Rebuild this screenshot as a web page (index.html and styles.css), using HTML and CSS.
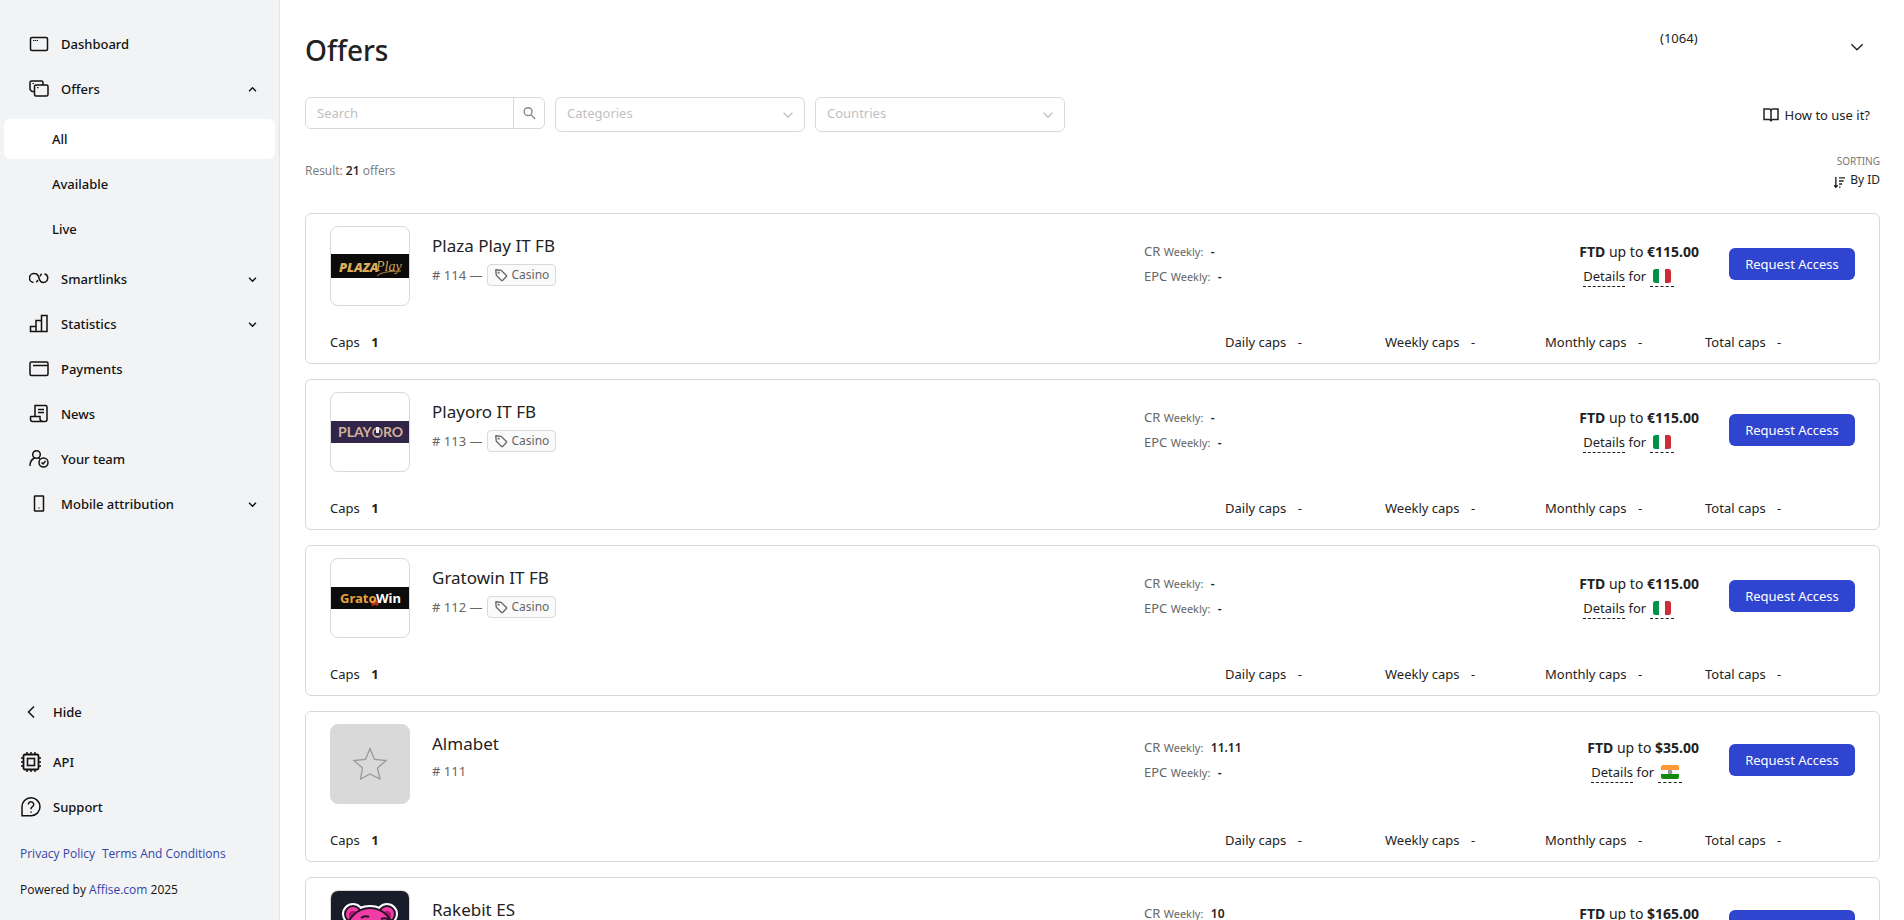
FILE: index.html
```html
<!DOCTYPE html>
<html lang="en">
<head>
<meta charset="UTF-8">
<meta name="viewport" content="width=device-width, initial-scale=1.0">
<title>Offers</title>
<link rel="stylesheet" href="styles.css">
</head>
<body>
<!-- shared icons -->
<svg class="sprite" aria-hidden="true">
    <symbol id="chevron" viewBox="0 0 16 16"><path d="M3 5.5l5 5 5-5"/></symbol>
    <symbol id="tag" viewBox="0 0 16 16"><path d="M2 2.5L2.6 8.2L8.6 14.2Q9.2 14.8 9.8 14.2L14.2 9.8Q14.8 9.2 14.2 8.6L8.2 2.6L2.5 2Q2 2 2 2.5Z"/><path d="M5 5h.6v.6H5z"/></symbol>
    <symbol id="italy" viewBox="0 0 18 14">
        <path d="M2.5 0H6v14H2.5Q0 14 0 11.5v-9Q0 0 2.5 0Z" fill="#009246"/>
        <path d="M12 0h3.500Q18 0 18 2.500v9Q18 14 15.500 14H12Z" fill="#ce2b37"/>
        <path d="M6 0h6v14H6z" fill="#fff"/>
    </symbol>
    <symbol id="india" viewBox="0 0 18 14">
        <path d="M2 0h14q2 0 2 2v3H0V2q0-2 2-2Z" fill="#f93"/>
        <path d="M0 5h18v4H0z" fill="#f4f4f4"/>
        <path d="M0 9h18v3q0 2-2 2H2q-2 0-2-2Z" fill="#138808"/>
        <circle cx="9" cy="7" r="1.500" fill="#bbc" stroke="#889"/>
    </symbol>
</svg>

<div class="layout">
    <aside class="sidebar">
        <nav class="menu">
            <a href="#" class="menu-item">
                <svg class="icon" viewBox="0 0 20 20"><rect x="1.500" y="3.500" width="17" height="13" rx="1.500"/><path d="M4 6.500h5" stroke-width="1" stroke-dasharray="1.300 .6"/></svg>
                <span>Dashboard</span>
            </a>
            <a href="#" class="menu-item">
                <svg class="icon" viewBox="0 0 20 20"><path d="M5 12.500H3L1 10.500V3.500Q1 2 2.500 2H12.500Q14 2 14 3.500V6"/><rect x="5.500" y="6" width="13.500" height="11" rx="1.500"/><path d="M3.500 4.500h1.500M8 8.700h1.500" stroke-width="1.200"/></svg>
                <span>Offers</span>
                <svg class="arrow arrow-up"><use href="#chevron"/></svg>
            </a>
            <div class="submenu">
                <a href="#" class="submenu-item active">All</a>
                <a href="#" class="submenu-item">Available</a>
                <a href="#" class="submenu-item">Live</a>
            </div>
            <a href="#" class="menu-item">
                <svg class="icon" viewBox="0 0 20 20"><path d="M4.500 13.500A4.500 4.500 0 0 1 5.500 4.500Q9 4.500 10 9T14.500 13.500A4.500 4.500 0 0 0 15.500 4.700M7.200 13.200Q8.600 12.400 8.800 10.800M12.800 4.900Q11.400 5.700 11.200 7.300"/></svg>
                <span>Smartlinks</span>
                <svg class="arrow"><use href="#chevron"/></svg>
            </a>
            <a href="#" class="menu-item">
                <svg class="icon" viewBox="0 0 20 20"><path d="M1.500 17.500V12.500H7V17.500ZM7 17.500V6.500H12.500V17.500ZM12.500 17.500V1.500H18V17.500Z"/></svg>
                <span>Statistics</span>
                <svg class="arrow"><use href="#chevron"/></svg>
            </a>
            <a href="#" class="menu-item">
                <svg class="icon" viewBox="0 0 20 20"><rect x="1" y="3" width="18" height="13.500" rx="1.500"/><path d="M4 6.500h15"/></svg>
                <span>Payments</span>
            </a>
            <a href="#" class="menu-item">
                <svg class="icon" viewBox="0 0 20 20"><path d="M6 12V1.500H16.500Q18 1.500 18 3V15.500Q18 17.500 16 17.500H3.500Q1.500 17.500 1.500 15V13Q1.500 12.500 2 12.500H11V15Q11.500 17.500 14 17.500M9 5.500h6M9 8.500h6"/></svg>
                <span>News</span>
            </a>
            <a href="#" class="menu-item">
                <svg class="icon" viewBox="0 0 20 20"><circle cx="7.500" cy="5.500" r="3.800"/><path d="M1 17Q1 11 5.500 9M9.500 9L11 10M12.500 13.500l1.500 1.500 2.500-3"/><circle cx="14.500" cy="13.500" r="4.500"/></svg>
                <span>Your team</span>
            </a>
            <a href="#" class="menu-item">
                <svg class="icon" viewBox="0 0 20 20"><rect x="5.500" y="2" width="9" height="15" rx=".5"/><path d="M9.300 14h1.400" stroke-width="1"/></svg>
                <span>Mobile attribution</span>
                <svg class="arrow"><use href="#chevron"/></svg>
            </a>
        </nav>

        <div class="sidebar-bottom">
            <button type="button" class="bottom-item hide-btn">
                <svg class="icon" viewBox="0 0 20 20"><path d="M13 4.500L7.500 10l5.500 5.500"/></svg>
                <span>Hide</span>
            </button>
            <a href="#" class="bottom-item">
                <svg class="icon" viewBox="0 0 20 20"><rect x="2.500" y="2.500" width="15" height="15" rx="1.500" stroke-width="1.800"/><rect x="6.500" y="6.500" width="7" height="7" stroke-width="1.600"/><path d="M6 0v2M10 0v2M14 0v2M6 18v2M10 18v2M14 18v2M0 6h2M0 10h2M0 14h2M18 6h2M18 10h2M18 14h2"/></svg>
                <span>API</span>
            </a>
            <a href="#" class="bottom-item">
                <svg class="icon" viewBox="0 0 20 20"><path d="M1 18.800V10A9 9 0 1 1 10 18.800ZM7.300 7.500A2.700 2.700 0 1 1 11.500 9.700Q10 10.600 10 12.300M10 14.500v1.200"/></svg>
                <span>Support</span>
            </a>
            <div class="policies">
                <a href="#">Privacy Policy</a>
                <a href="#">Terms And Conditions</a>
            </div>
            <div class="powered">Powered by <a href="#">Affise.com</a> 2025</div>
        </div>
    </aside>

    <main class="content">
        <header class="page-header">
            <h1>Offers</h1>
            <button type="button" class="account">
                <span>(1064)</span>
                <svg class="account-arrow"><use href="#chevron"/></svg>
            </button>
        </header>

        <div class="toolbar">
            <form class="search">
                <input type="text" placeholder="Search" aria-label="Search">
                <button type="button" aria-label="Find">
                    <svg viewBox="0 0 16 16"><circle cx="6.500" cy="6" r="4.200"/><path d="M9.500 9.200L14 13.800"/></svg>
                </button>
            </form>
            <div class="select">
                <select aria-label="Categories"><option>Categories</option></select>
                <svg><use href="#chevron"/></svg>
            </div>
            <div class="select">
                <select aria-label="Countries"><option>Countries</option></select>
                <svg><use href="#chevron"/></svg>
            </div>
            <a href="#" class="how-to">
                <svg viewBox="0 0 16 16"><path d="M1 2H6Q8 2 8 4Q8 2 10 2H15V12.500H10Q8 12.500 8 14.500Q8 12.500 6 12.500H1ZM8 4V14"/></svg>
                How to use it?
            </a>
        </div>

        <div class="summary">
            <div class="result">Result: <b>21</b> offers</div>
            <div class="sorting">
                <span class="sorting-label">Sorting</span>
                <button type="button">
                    <svg viewBox="0 0 12 12"><path d="M2 0v11M0 9l2 2.200L4 9M5.500 1H12M5.500 4.300h5M5.500 7.600h3.300M5.500 11h1.600"/></svg>
                    By ID
                </button>
            </div>
        </div>

        <section class="offers">
            <article class="offer">
                <div class="offer-top">
                    <div class="logo">
                        <svg viewBox="0 0 78 78">
                            <rect y="27" width="78" height="24" fill="#0d0b09"/>
                            <text x="8" y="45" class="logo-plaza">PLAZA</text>
                            <text x="45" y="44" class="logo-play">Play</text>
                            <path d="M46 49Q50 44 70 44" fill="none" stroke="#cba45a" stroke-width=".8"/>
                        </svg>
                    </div>
                    <div class="offer-info">
                        <div class="offer-main">
                            <h2>Plaza Play IT FB</h2>
                            <div class="meta"># 114 — <span class="tag"><svg><use href="#tag"/></svg>Casino</span></div>
                        </div>
                        <div class="rates">
                            <div>CR <small>Weekly:</small> <b>-</b></div>
                            <div>EPC <small>Weekly:</small> <b>-</b></div>
                        </div>
                        <div class="payout">
                            <div>
                                <div class="sum"><b>FTD</b> up to <b>€115.00</b></div>
                                <div class="details"><a href="#">Details</a> for <span class="flag"><svg><use href="#italy"/></svg></span></div>
                            </div>
                        </div>
                        <button type="button" class="request">Request Access</button>
                    </div>
                </div>
                <div class="caps">
                    <div class="caps-count">Caps <b>1</b></div>
                    <div>Daily caps <span>-</span></div>
                    <div>Weekly caps <span>-</span></div>
                    <div>Monthly caps <span>-</span></div>
                    <div>Total caps <span>-</span></div>
                </div>
            </article>

            <article class="offer">
                <div class="offer-top">
                    <div class="logo">
                        <svg viewBox="0 0 78 78">
                            <rect y="28" width="78" height="22" fill="#31254a"/>
                            <text x="7" y="44" class="logo-playoro">PLAY</text>
                            <circle cx="46.500" cy="39.500" r="4.400" fill="none" stroke="#d3b195" stroke-width="1.600"/>
                            <path d="M45 34h3v6h-3z" fill="#eee"/>
                            <text x="52" y="44" class="logo-playoro">RO</text>
                        </svg>
                    </div>
                    <div class="offer-info">
                        <div class="offer-main">
                            <h2>Playoro IT FB</h2>
                            <div class="meta"># 113 — <span class="tag"><svg><use href="#tag"/></svg>Casino</span></div>
                        </div>
                        <div class="rates">
                            <div>CR <small>Weekly:</small> <b>-</b></div>
                            <div>EPC <small>Weekly:</small> <b>-</b></div>
                        </div>
                        <div class="payout">
                            <div>
                                <div class="sum"><b>FTD</b> up to <b>€115.00</b></div>
                                <div class="details"><a href="#">Details</a> for <span class="flag"><svg><use href="#italy"/></svg></span></div>
                            </div>
                        </div>
                        <button type="button" class="request">Request Access</button>
                    </div>
                </div>
                <div class="caps">
                    <div class="caps-count">Caps <b>1</b></div>
                    <div>Daily caps <span>-</span></div>
                    <div>Weekly caps <span>-</span></div>
                    <div>Monthly caps <span>-</span></div>
                    <div>Total caps <span>-</span></div>
                </div>
            </article>

            <article class="offer">
                <div class="offer-top">
                    <div class="logo">
                        <svg viewBox="0 0 78 78">
                            <rect y="28" width="78" height="22" fill="#0c0c0c"/>
                            <path d="M40 43l4-3 4 3-1 4-3-1-3 1Z" fill="#b5301f"/>
                            <text x="9" y="44" class="logo-grato">Grato</text>
                            <text x="45" y="44" class="logo-win">Win</text>
                        </svg>
                    </div>
                    <div class="offer-info">
                        <div class="offer-main">
                            <h2>Gratowin IT FB</h2>
                            <div class="meta"># 112 — <span class="tag"><svg><use href="#tag"/></svg>Casino</span></div>
                        </div>
                        <div class="rates">
                            <div>CR <small>Weekly:</small> <b>-</b></div>
                            <div>EPC <small>Weekly:</small> <b>-</b></div>
                        </div>
                        <div class="payout">
                            <div>
                                <div class="sum"><b>FTD</b> up to <b>€115.00</b></div>
                                <div class="details"><a href="#">Details</a> for <span class="flag"><svg><use href="#italy"/></svg></span></div>
                            </div>
                        </div>
                        <button type="button" class="request">Request Access</button>
                    </div>
                </div>
                <div class="caps">
                    <div class="caps-count">Caps <b>1</b></div>
                    <div>Daily caps <span>-</span></div>
                    <div>Weekly caps <span>-</span></div>
                    <div>Monthly caps <span>-</span></div>
                    <div>Total caps <span>-</span></div>
                </div>
            </article>

            <article class="offer">
                <div class="offer-top">
                    <div class="logo logo-empty">
                        <svg viewBox="0 0 78 78"><path d="M39 23.500L43.500 34.500L55 35.500L46.500 43L49 54L39 49L29.500 54L31.500 43L23 35.500L34.500 34.500Z" fill="none" stroke="#999" stroke-width="1.300"/></svg>
                    </div>
                    <div class="offer-info">
                        <div class="offer-main">
                            <h2>Almabet</h2>
                            <div class="meta"># 111</div>
                        </div>
                        <div class="rates">
                            <div>CR <small>Weekly:</small> <b>11.11</b></div>
                            <div>EPC <small>Weekly:</small> <b>-</b></div>
                        </div>
                        <div class="payout">
                            <div>
                                <div class="sum"><b>FTD</b> up to <b>$35.00</b></div>
                                <div class="details"><a href="#">Details</a> for <span class="flag"><svg><use href="#india"/></svg></span></div>
                            </div>
                        </div>
                        <button type="button" class="request">Request Access</button>
                    </div>
                </div>
                <div class="caps">
                    <div class="caps-count">Caps <b>1</b></div>
                    <div>Daily caps <span>-</span></div>
                    <div>Weekly caps <span>-</span></div>
                    <div>Monthly caps <span>-</span></div>
                    <div>Total caps <span>-</span></div>
                </div>
            </article>

            <article class="offer">
                <div class="offer-top">
                    <div class="logo">
                        <svg viewBox="0 0 78 78">
                            <rect width="78" height="78" fill="#191d29"/>
                            <g stroke="#fff" stroke-width="6" fill="#fff"><circle cx="22" cy="23" r="8"/><circle cx="56" cy="23" r="8"/><ellipse cx="39" cy="42" rx="25" ry="25"/></g>
                            <g stroke="#24152a" stroke-width="2" fill="#f23da6"><circle cx="22" cy="23" r="8"/><circle cx="56" cy="23" r="8"/></g>
                            <circle cx="22" cy="24" r="4" fill="#b3156f"/><circle cx="56" cy="24" r="4" fill="#b3156f"/>
                            <ellipse cx="39" cy="42" rx="24" ry="25" stroke="#24152a" stroke-width="2" fill="#f23da6"/>
                            <path d="M30 27q4-3 8-1M50 28q5-2 8 1" fill="none" stroke="#24152a" stroke-width="2"/>
                            <circle cx="31" cy="38" r="3" fill="#24152a"/><circle cx="47" cy="38" r="3" fill="#24152a"/>
                        </svg>
                    </div>
                    <div class="offer-info">
                        <div class="offer-main">
                            <h2>Rakebit ES</h2>
                            <div class="meta"></div>
                        </div>
                        <div class="rates">
                            <div>CR <small>Weekly:</small> <b>10</b></div>
                            <div></div>
                        </div>
                        <div class="payout">
                            <div>
                                <div class="sum"><b>FTD</b> up to <b>$165.00</b></div>
                                <div class="details"></div>
                            </div>
                        </div>
                        <button type="button" class="request" aria-label="Request Access"></button>
                    </div>
                </div>
            </article>
        </section>
    </main>
</div>
</body>
</html>
```

FILE: styles.css
```css
* {
    box-sizing: border-box;
}

body {
    margin: 0;
    font-family: "Noto Sans", "Open Sans", sans-serif;
    font-size: 13px;
    line-height: 20px;
    color: #222;
    background: #fff;
}

a {
    color: inherit;
    text-decoration: none;
}

button {
    font: inherit;
    color: inherit;
    background: none;
    border: none;
    padding: 0;
    cursor: pointer;
}

svg {
    flex-shrink: 0;
    fill: none;
    stroke: currentColor;
    stroke-width: 1.5;
}

.sprite {
    display: none;
}

.layout {
    display: flex;
    height: 100vh;
    overflow: hidden;
}

/* sidebar */
.sidebar {
    display: flex;
    flex-direction: column;
    justify-content: space-between;
    flex: 0 0 280px;
    padding: 24px 4px 20px;
    background: #f2f3f5;
    border-right: 1px solid #e2e3e5;
    color: #111;
    font-weight: 500;
}

.menu, .submenu {
    display: flex;
    flex-direction: column;
    gap: 5px;
}

.submenu {
    padding: 5px 0;
}

.menu-item {
    display: flex;
    align-items: center;
    gap: 12px;
    height: 40px;
    padding: 0 17px 0 25px;
}

.icon {
    width: 20px;
    height: 20px;
}

.arrow {
    width: 11px;
    height: 11px;
    margin-left: auto;
    stroke-width: 2;
}

.arrow-up {
    transform: rotate(180deg);
}

.submenu-item {
    height: 40px;
    padding: 0 48px;
    line-height: 40px;
    border-radius: 6px;
}

.submenu-item.active {
    background: #fff;
}

.sidebar-bottom {
    display: flex;
    flex-direction: column;
    padding: 0 16px;
}

.bottom-item {
    display: flex;
    align-items: center;
    gap: 12px;
    height: 45px;
    padding-left: 1px;
}

.hide-btn {
    margin-bottom: 5px;
    font-weight: 500;
}

.policies {
    display: flex;
    gap: 7px;
    margin: 15px 0 16px;
}

.policies, .powered {
    font-family: "Open Sans", "Noto Sans", sans-serif;
    font-size: 12px;
}

.policies a, .powered a {
    color: #3344a8;
}

/* content */
.content {
    flex: 1;
    min-width: 0;
    padding: 24px 24px 0 25px;
    overflow-y: auto;
    scrollbar-width: none;
}

.page-header {
    display: flex;
    justify-content: space-between;
    align-items: center;
    height: 52px;
}

h1 {
    margin: 0;
    font-size: 28px;
    line-height: 40px;
    font-weight: 500;
}

.account {
    display: flex;
    justify-content: space-between;
    align-items: flex-start;
    width: 220px;
    height: 44px;
    padding-right: 14px;
}

.account-arrow {
    width: 18px;
    height: 18px;
    margin-top: 10px;
    stroke-width: 1.2;
}

.toolbar {
    display: flex;
    gap: 10px;
    margin-top: 21px;
}

.search {
    display: flex;
    width: 240px;
    height: 32px;
    border: 1px solid #d9d9d9;
    border-radius: 6px;
}

.search input {
    flex: 1;
    min-width: 0;
    padding: 0 11px;
    font: inherit;
    border: none;
    background: none;
    outline: none;
}

.search input::placeholder {
    color: #bfbfbf;
}

.search button {
    width: 31px;
    border-left: 1px solid #d9d9d9;
    color: #888;
}

.search svg {
    display: block;
    width: 15px;
    height: 15px;
    margin: 0 auto;
}

.select {
    position: relative;
    width: 250px;
}

.select select {
    width: 100%;
    height: 35px;
    padding: 0 11px 4px;
    appearance: none;
    font: inherit;
    color: #bfbfbf;
    background: #fff;
    border: 1px solid #d9d9d9;
    border-radius: 6px;
}

.select svg {
    position: absolute;
    top: 11px;
    right: 10px;
    width: 14px;
    height: 14px;
    color: #bfbfbf;
    pointer-events: none;
}

.how-to {
    display: flex;
    align-items: center;
    gap: 6px;
    margin-left: auto;
    padding-right: 10px;
}

.how-to svg {
    width: 16px;
    height: 16px;
}

.summary {
    display: flex;
    justify-content: space-between;
    align-items: center;
    height: 40px;
    margin: 19px 0 22px;
}

.result {
    font-family: "Open Sans", "Noto Sans", sans-serif;
    font-size: 12px;
    color: #777;
}

.result b {
    font-weight: 600;
    color: #222;
}

.sorting {
    display: flex;
    flex-direction: column;
    align-items: flex-end;
}

.sorting-label {
    font-size: 10px;
    line-height: 18px;
    text-transform: uppercase;
    color: #777;
}

.sorting button {
    display: flex;
    align-items: center;
    gap: 5px;
    font-size: 12px;
}

.sorting svg {
    width: 11px;
    height: 11px;
    margin-top: 4px;
}

/* offers */
.offers {
    display: flex;
    flex-direction: column;
    gap: 15px;
}

.offer {
    padding: 12px 24px 10px;
    border: 1px solid #d9d9d9;
    border-radius: 6px;
}

.offer-top {
    display: flex;
    align-items: flex-start;
    gap: 22px;
}

.logo {
    width: 80px;
    height: 80px;
    border: 1px solid #d9d9d9;
    border-radius: 8px;
    overflow: hidden;
}

.logo svg {
    display: block;
    width: 78px;
    height: 78px;
    stroke: none;
}

.logo-empty {
    background: #d9d9d9;
}

.logo text {
    font-weight: 700;
}

.logo .logo-plaza {
    font-size: 13px;
    font-style: italic;
    font-weight: 900;
    fill: #d9ae5c;
}

.logo .logo-play {
    font-family: "Liberation Serif", serif;
    font-size: 14px;
    font-style: italic;
    font-weight: 400;
    fill: #cba45a;
}

.logo .logo-playoro {
    font-family: Lato, sans-serif;
    font-size: 14px;
    fill: #d3b195;
}

.logo .logo-grato {
    font-size: 13px;
    fill: #e8a23a;
}

.logo .logo-win {
    font-size: 13px;
    fill: #fff;
}

.offer-info {
    display: flex;
    flex: 1;
    align-items: center;
    padding-top: 6px;
}

.offer-main {
    flex: 1;
    padding-bottom: 10px;
}

h2 {
    margin: 0 0 4px;
    font-size: 17px;
    line-height: 28px;
    font-weight: 400;
}

.meta {
    display: flex;
    align-items: center;
    gap: 5px;
    min-height: 18px;
    line-height: 18px;
    color: #666;
}

.tag {
    display: flex;
    align-items: center;
    gap: 3px;
    height: 22px;
    padding: 0 6px;
    font-size: 12px;
    background: #fafafa;
    border: 1px solid #d9d9d9;
    border-radius: 4px;
}

.tag svg {
    width: 14px;
    height: 14px;
}

.rates {
    width: 360px;
    line-height: 25px;
    color: #666;
}

.rates div, .payout .details {
    min-height: 25px;
}

.rates small {
    font-size: 11px;
}

.rates b {
    margin-left: 4px;
    font-size: 12px;
    font-weight: 600;
    color: #222;
}

.payout {
    display: flex;
    justify-content: flex-end;
    width: 195px;
    line-height: 25px;
}

.sum {
    font-size: 14px;
}

.payout b {
    font-weight: 700;
}

.details {
    padding-left: 4px;
}

.details a, .flag {
    padding-bottom: 1px;
    border-bottom: 1px dashed #222;
}

.flag {
    padding: 0 3px 1px;
}

.flag svg {
    width: 18px;
    height: 14px;
    vertical-align: -2px;
    stroke: none;
}

.request {
    width: 126px;
    height: 32px;
    margin-left: 30px;
    color: #fff;
    background: #2f45d0;
    border-radius: 6px;
}

.caps {
    display: flex;
    margin-top: 25px;
    line-height: 22px;
}

.caps div {
    width: 160px;
}

.caps div:last-child {
    width: 150px;
}

.caps .caps-count {
    flex: 1;
}

.caps b, .caps span {
    margin-left: 8px;
}
```
